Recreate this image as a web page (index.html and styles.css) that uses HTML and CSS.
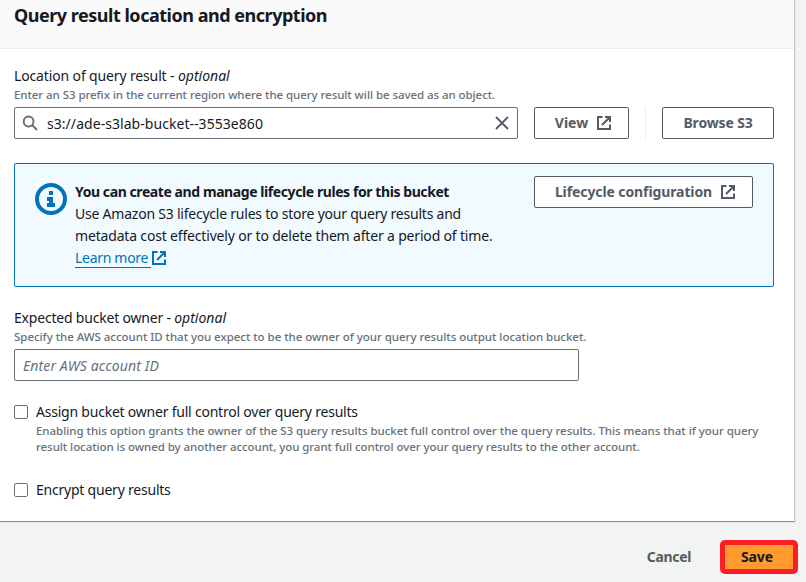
FILE: index.html
```
<!DOCTYPE html>
<html lang="en">
<head>
<meta charset="utf-8">
<title>Query result location and encryption</title>
<link rel="stylesheet" href="styles.css">
</head>
<body>
<svg width="0" height="0" class="defs" aria-hidden="true">
  <symbol id="external" viewBox="0 0 16 16"><path d="M9 2h5v5M6 10l8-8M14 9.5V14H2V2h4.5" fill="none" stroke="currentColor" stroke-width="2"/></symbol>
</svg>
<main class="panel">
  <header class="panel-header"><h2>Query result location and encryption</h2></header>
  <div class="panel-body">
    <section class="field location">
      <div class="label"><span class="label-location">Location of query result - </span><i>optional</i></div>
      <div class="hint hint-tight">Enter an S3 prefix in the current region where the query result will be saved as an object.</div>
      <div class="resource-row">
        <div class="input search">
          <svg class="icon" viewBox="0 0 16 16" fill="none" stroke="#687078" stroke-width="2"><circle cx="6.6" cy="6.5" r="4.9"/><path d="M10.2 10.1L15 15"/></svg>
          <span class="value">s3://ade-s3lab-bucket--3553e860</span>
          <svg class="icon" viewBox="0 0 16 16" fill="none" stroke="#545b64" stroke-width="1.8"><path d="M2 2l12 12M14 2L2 14"/></svg>
        </div>
        <button class="button view"><span>View</span><svg class="icon"><use href="#external"/></svg></button>
        <div class="divider"></div>
        <button class="button browse"><span>Browse S3</span></button>
      </div>
    </section>
    <section class="alert">
      <svg class="info" viewBox="0 0 32 32"><circle cx="16" cy="16" r="14" fill="none" stroke="#0073bb" stroke-width="4"/><path d="M14 8h4v4h-4zM12 14h6v6h2v4h-8v-4h2v-2h-2z" fill="#0073bb"/></svg>
      <div class="alert-text">
        <div class="alert-title">You can create and manage lifecycle rules for this bucket</div>
        <div class="line-one">Use Amazon S3 lifecycle rules to store your query results and</div>
        <div class="line-two">metadata cost effectively or to delete them after a period of time.</div>
        <a class="learn"><span>Learn more</span><svg class="icon"><use href="#external"/></svg></a>
      </div>
      <button class="button lifecycle"><span>Lifecycle configuration</span><svg class="icon"><use href="#external"/></svg></button>
    </section>
    <section class="field owner">
      <div class="label"><span class="label-owner">Expected bucket owner - </span><i>optional</i></div>
      <div class="hint">Specify the AWS account ID that you expect to be the owner of your query results output location bucket.</div>
      <div class="input account"><i>Enter AWS account ID</i></div>
    </section>
    <section class="check assign">
      <span class="box"></span>
      <div>
        <div class="check-label">Assign bucket owner full control over query results</div>
        <div class="hint">Enabling this option grants the owner of the S3 query results bucket full control over the query results. This means that if your query</div>
        <div class="hint hint-tight">result location is owned by another account, you grant full control over your query results to the other account.</div>
      </div>
    </section>
    <section class="check encrypt"><span class="box"></span><div class="check-label">Encrypt query results</div></section>
  </div>
</main>
<footer class="actions">
  <button class="cancel">Cancel</button>
  <button class="save">Save</button>
</footer>
</body>
</html>
```
FILE: styles.css
```
* { box-sizing: border-box; }
body { margin: 0; width: 806px; height: 582px; overflow: hidden; background: #f2f3f3; color: #16191f; font: 14px/22px "Noto Sans", "Open Sans", sans-serif; white-space: nowrap; }
.defs { position: absolute; }
button { font: 700 14px/20px "Noto Sans", "Open Sans", sans-serif; margin: 0; }
.icon { width: 16px; height: 16px; flex: none; display: block; }
.panel { width: 795px; height: 522px; background: #fff; border-right: 1px solid #c5cccc; border-bottom: 1px solid #879596; box-shadow: 1px 1px 1px #e4e8e8; }
.panel-header { height: 49px; padding: 4px 14px 0; background: #fafafa; border-bottom: 1px solid #eaeded; }
h2 { margin: 0; font-size: 18px; line-height: 22px; letter-spacing: -.48px; }
.panel-body { padding: 16px 20px 0 14px; }
.label { height: 22px; }
.label-location { letter-spacing: -.14px; }
.label-owner { letter-spacing: -.2px; }
.hint { height: 16px; font-size: 11.5px; font-weight: 500; line-height: 15px; color: #687078; letter-spacing: -.037px; }
.hint-tight { letter-spacing: -.063px; }
.resource-row { display: flex; margin-top: 4px; }
.input { height: 32px; border: 1px solid #687078; border-radius: 2px; background: #fff; display: flex; align-items: center; }
.search { width: 504px; padding: 0 7px; }
.value { flex: 1; margin-left: 9px; padding-top: 2px; letter-spacing: .05px; }
.button { height: 32px; display: flex; align-items: center; justify-content: center; gap: 8px; padding: 0; color: #545b64; background: #fff; border: 1px solid #545b64; border-radius: 2px; }
.view { width: 95px; margin-left: 16px; padding-left: 4px; }
.divider { width: 1px; background: #eaeded; margin: 0 16px; }
.browse { width: 112px; letter-spacing: -.15px; }
.alert { display: flex; height: 124px; margin-top: 24px; padding: 12px 20px; border: 1px solid #0073bb; border-radius: 2px; background: #f1faff; }
.info { width: 32px; height: 32px; flex: none; margin: 7px 8px 0 0; }
.alert-text { flex: 1; padding-top: 5px; }
.alert-title { font-weight: 700; letter-spacing: -.42px; }
.line-one { letter-spacing: -.225px; }
.line-two { letter-spacing: -.175px; }
.learn { display: flex; align-items: flex-start; width: max-content; color: #0073bb; letter-spacing: -.3px; }
.learn span { width: 76px; height: 21px; line-height: 22px; border-bottom: 1px solid #0073bb; }
.learn .icon { margin-top: 3px; }
.lifecycle { width: 219px; padding-left: 4px; letter-spacing: -.1px; }
.owner { margin-top: 20px; }
.owner .input { width: 565px; margin-top: 4px; padding: 2px 0 0 8px; color: #687078; letter-spacing: .12px; }
.check { display: flex; gap: 8px; }
.box { width: 14px; height: 14px; margin-top: 4px; border: 1px solid #687078; border-radius: 2px; }
.check-label { letter-spacing: -.22px; }
.assign { margin-top: 20px; }
.encrypt { margin-top: 24px; }
.actions { display: flex; justify-content: flex-end; align-items: center; padding: 18px 8px 0 0; gap: 29px; }
.cancel { border: 0; padding: 0; background: none; color: #545b64; letter-spacing: -.35px; }
.save { width: 78px; height: 34px; padding: 0 4px 0 0; color: #16191f; background: #ff9b2e; border: 5px solid #ff1c24; border-radius: 5px; line-height: 22px; letter-spacing: -.1px; }
```
